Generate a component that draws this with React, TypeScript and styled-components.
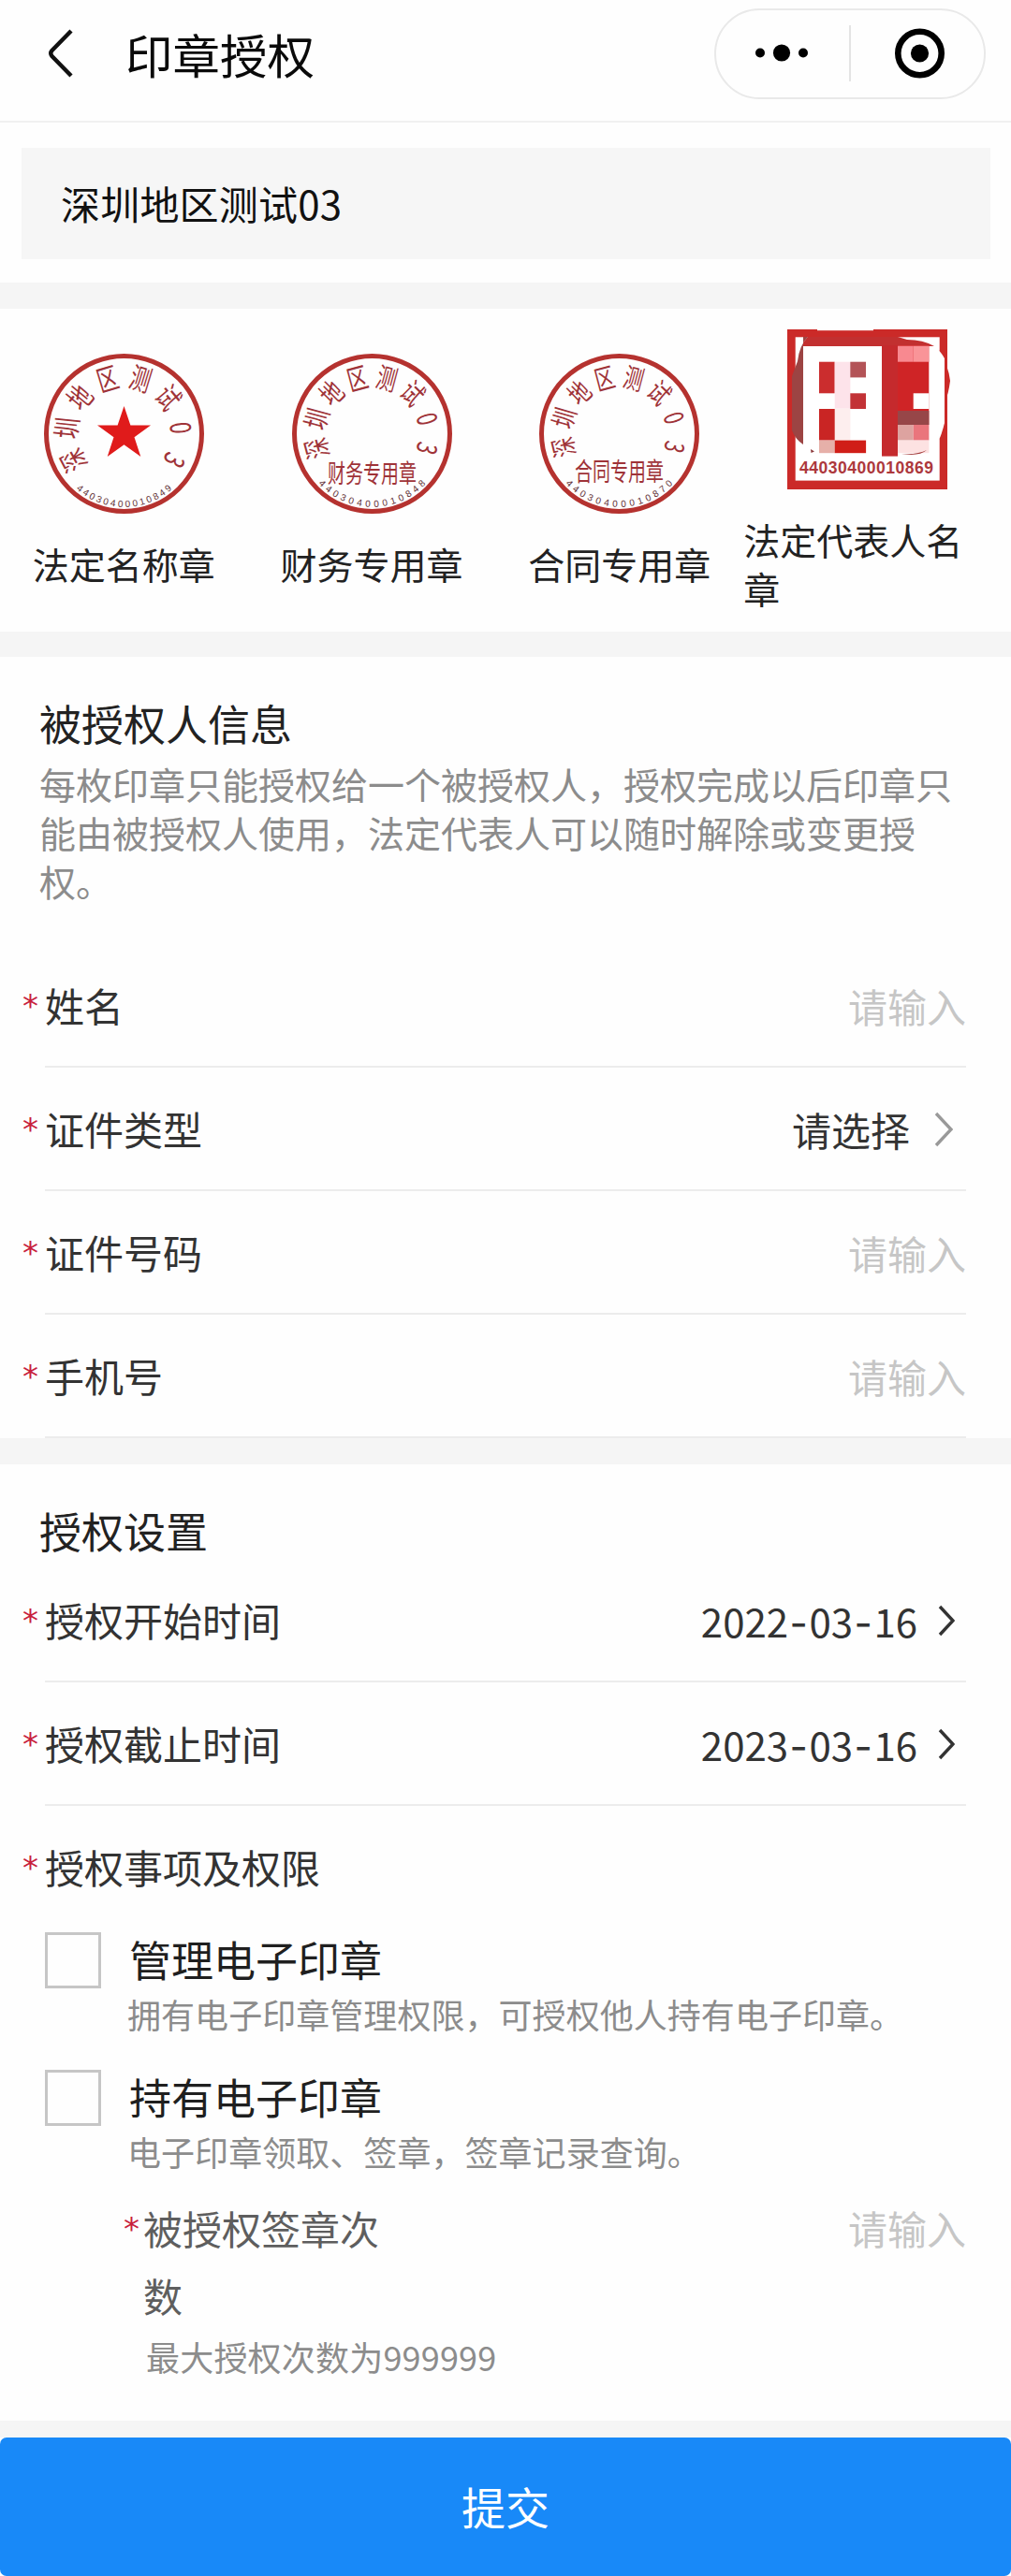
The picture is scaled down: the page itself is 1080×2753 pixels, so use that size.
import styled, { createGlobalStyle } from "styled-components"

type RingSealType = {
  name: string
  code: string
  step: number
  codeStep: number
  size: number
  caption?: string
  captionY?: number
}

type FieldType = {
  label: string
  value: string
  kind: "input" | "select" | "date"
}

const company = "深圳地区测试03"

const personFields: FieldType[] = [
  { label: "姓名", value: "请输入", kind: "input" },
  { label: "证件类型", value: "请选择", kind: "select" },
  { label: "证件号码", value: "请输入", kind: "input" },
  { label: "手机号", value: "请输入", kind: "input" },
]

const dateFields: FieldType[] = [
  { label: "授权开始时间", value: "2022-03-16", kind: "date" },
  { label: "授权截止时间", value: "2023-03-16", kind: "date" },
]

// Round company seal, 0,0 is the center of the ring
const RingSeal = (props: RingSealType) => {
  const chars = props.name.split("")
  const digits = props.code.split("")

  return (
    <SealSvg viewBox="-85.5 -85.5 171 171">
      <circle r="83" fill="none" stroke="#b5322f" strokeWidth="5" />
      {chars.map((char, i) => (
        <SealChar
          key={i}
          fontSize={props.size}
          transform={`rotate(${(i - (chars.length - 1) / 2) * props.step}) translate(0 -61) scale(0.72 1)`}
          y={props.size * 0.37}
        >
          {char}
        </SealChar>
      ))}
      {digits.map((digit, i) => (
        <SealDigit
          key={i}
          transform={`rotate(${((digits.length - 1) / 2 - i) * props.codeStep}) translate(0 75)`}
          y="3.4"
        >
          {digit}
        </SealDigit>
      ))}
      {props.caption
        ? <SealChar fontSize="27.5" transform={`translate(0 ${props.captionY}) scale(0.69 1)`} y="10.2">{props.caption}</SealChar>
        : <path d="M0 -29.6 L6.9 -9 H28.5 L11 3.8 L17.8 24.6 L0 11.8 L-17.8 24.6 L-11 3.8 L-28.5 -9 H-6.9 Z" fill="#e01b1b" />}
    </SealSvg>
  )
}

// Square name seal, the name itself is covered with mosaic
const NameSeal = () => (
  <SealSvg viewBox="0 0 171 171">
    <rect width="171" height="171" fill="#cb2a28" />
    <rect x="32" width="60" height="1.2" fill="#fff" />
    <rect x="8.7" y="8.3" width="154" height="153.3" fill="#fff" />
    <path d="M22 8 Q13 17 11 34 L5 50 V108 Q9 118 17 123 V8 Z" fill="#9c4443" />
    <path d="M22 8 H118 L128 11 Q145 11 157 18 H17 V14 Z" fill="#c23030" />
    <path d="M162 22 Q172 38 174 55 Q172 70 169 75 Q170 100 162 118 Z" fill="#cb2a28" />
    <path d="M151 18 H157 Q163 22 168 31 V100 Q165 112 162 118 L151 136 Z" fill="#fff" />
    <rect x="17" y="18" width="84" height="118" fill="#fff" />
    <rect x="34" y="34.7" width="16.7" height="33.6" fill="#cb2d2e" />
    <rect x="50.7" y="34.7" width="16.7" height="50" fill="#fde3ea" />
    <rect x="50.7" y="84.7" width="16.7" height="34" fill="#fdeeee" />
    <rect x="67.3" y="34.7" width="16.7" height="16.7" fill="#b35357" />
    <rect x="67.3" y="68.3" width="16.7" height="16.7" fill="#c23236" />
    <rect x="34" y="85" width="16.7" height="33.6" fill="#c92524" />
    <rect x="34" y="118.6" width="16.7" height="13.6" fill="#e6b0a9" />
    <rect x="50.7" y="118.6" width="33.4" height="13.6" fill="#d01e18" />
    <rect x="101" y="17" width="50.3" height="85" fill="#cf2426" />
    <rect x="101" y="17" width="17" height="118.6" fill="#c52a2d" />
    <rect x="118" y="17.7" width="16.7" height="17" fill="#f88990" />
    <rect x="134.7" y="17.7" width="16.7" height="17" fill="#f99498" />
    <rect x="134.7" y="68.3" width="16.7" height="16.7" fill="#fff" />
    <rect x="118" y="87" width="33.4" height="15" fill="#974648" />
    <rect x="118" y="102" width="16.7" height="16.6" fill="#dda3a0" />
    <rect x="134.7" y="102" width="16.7" height="16.6" fill="#ea757c" />
    <rect x="118" y="118.6" width="33.4" height="13.6" fill="#fde2e2" />
    <path d="M122 133 Q140 134 149 129 Q141 136 122 133 Z" fill="#a33b3b" />
    <path d="M25 128 L29 130.5 L25.5 132 Z" fill="#8c3a3c" />
    <SquareCode x="13" y="153.6" textLength="143">44030400010869</SquareCode>
  </SealSvg>
)

const Field = (props: FieldType) => (
  <FieldRow>
    <Star>*</Star>
    <FieldBody>
      <FieldLabel>{props.label}</FieldLabel>
      {props.kind === "input" && <Placeholder>{props.value}</Placeholder>}
      {props.kind === "select" && (
        <Value>
          {props.value}
          <Chevron viewBox="0 0 20 38" $width={20} $height={38} $gap={26} $right={14} stroke="#999">
            <path d="M2 2 L18 19 L2 36" />
          </Chevron>
        </Value>
      )}
      {props.kind === "date" && (
        <Value>
          <span>
            {props.value.split("-").map((part, i) => (
              <span key={i}>{i > 0 && <DateDash>-</DateDash>}{part}</span>
            ))}
          </span>
          <Chevron viewBox="0 0 18 34" $width={18} $height={34} $gap={22} $right={12} stroke="#333">
            <path d="M2 2 L16 17 L2 32" />
          </Chevron>
        </Value>
      )}
    </FieldBody>
  </FieldRow>
)

const App = () => {
  return (
    <Page>
      <GlobalStyle />
      <Header>
        <BackIcon viewBox="0 0 28 52">
          <path d="M25 2 L4.5 23 Q2 26 4.5 29 L25 50" />
        </BackIcon>
        <Title>印章授权</Title>
        <Capsule>
          <CapsuleIcon viewBox="0 0 142 60">
            <circle cx="47" cy="29.5" r="5" />
            <circle cx="70" cy="29.5" r="9.1" />
            <circle cx="93" cy="29.5" r="5" />
          </CapsuleIcon>
          <CapsuleLine />
          <CapsuleIcon viewBox="0 0 142 60">
            <circle cx="73.5" cy="30" r="23.2" fill="none" stroke="#000" strokeWidth="6.6" />
            <circle cx="73.5" cy="30" r="9.6" />
          </CapsuleIcon>
        </Capsule>
      </Header>

      <Company>{company}</Company>
      <Divider $height={28} />

      <Seals>
        <SealItem>
          <RingSeal name={company} code="44030400010849" step={33.7} codeStep={5.97} size={31} />
          <SealLabel>法定名称章</SealLabel>
        </SealItem>
        <SealItem>
          <RingSeal name={company} code="44030400010848" step={30} codeStep={6.92} size={30} caption="财务专用章" captionY={42} />
          <SealLabel>财务专用章</SealLabel>
        </SealItem>
        <SealItem>
          <RingSeal name={company} code="44030400010870" step={29.6} codeStep={6.92} size={29} caption="合同专用章" captionY={40} />
          <SealLabel>合同专用章</SealLabel>
        </SealItem>
        <SealItem>
          <NameSeal />
          <SealLabel>法定代表人名章</SealLabel>
        </SealItem>
      </Seals>
      <Divider $height={27} />

      <Section>
        <SectionTitle>被授权人信息</SectionTitle>
        <SectionText>
          每枚印章只能授权给一个被授权人，授权完成以后印章只能由被授权人使用，法定代表人可以随时解除或变更授权。
        </SectionText>
        {personFields.map((field) => <Field key={field.label} {...field} />)}
      </Section>
      <Divider $height={28} />

      <Section>
        <SectionTitle>授权设置</SectionTitle>
        {dateFields.map((field) => <Field key={field.label} {...field} />)}
        <RightsRow>
          <Star>*</Star>
          <FieldLabel>授权事项及权限</FieldLabel>
        </RightsRow>
        <Option>
          <Checkbox />
          <OptionTitle>管理电子印章</OptionTitle>
          <OptionText>拥有电子印章管理权限，可授权他人持有电子印章。</OptionText>
        </Option>
        <Option>
          <Checkbox />
          <OptionTitle>持有电子印章</OptionTitle>
          <OptionText>电子印章领取、签章，签章记录查询。</OptionText>
        </Option>
        <CountRow>
          <Star>*</Star>
          <CountLabel>被授权签章次数</CountLabel>
          <Placeholder>请输入</Placeholder>
        </CountRow>
        <Hint>最大授权次数为999999</Hint>
      </Section>
      <Divider $height={18} />
      <Submit>提交</Submit>
    </Page>
  )
}

export default App

const GlobalStyle = createGlobalStyle`
  * {
    box-sizing: border-box;
  }
  body {
    margin: 0;
    background-color: #f5f5f5;
    font-family: "Noto Sans CJK SC", "Noto Sans", sans-serif;
  }
`

const Page = styled.div`
  width: 1080px;
  background-color: #fefefe;
  color: #333;
  font-size: 42px;
`

const Header = styled.header`
  height: 131px;
  padding: 0 27px 15px 51px;
  border-bottom: 2px solid #f1f1f1;
  display: flex;
  align-items: center;
`

const BackIcon = styled.svg`
  width: 28px;
  height: 52px;
  fill: none;
  stroke: #111;
  stroke-width: 4.4;
`

const Title = styled.h1`
  margin: 0 auto 0 55px;
  color: #0a0a0a;
  font-size: 50.5px;
  font-weight: 400;
  line-height: 72px;
`

const Capsule = styled.div`
  width: 290px;
  height: 97px;
  border: 2px solid #e9e9e9;
  border-radius: 49px;
  display: flex;
  align-items: center;
`

const CapsuleIcon = styled.svg`
  width: 142px;
  height: 60px;
`

const CapsuleLine = styled.div`
  width: 2px;
  height: 60px;
  background-color: #e4e4e4;
`

const Company = styled.div`
  height: 119px;
  margin: 27px 22px 25px 23px;
  padding-left: 42px;
  background-color: #f6f6f6;
  color: #111;
  letter-spacing: 0.2px;
  line-height: 117px;
`

const Divider = styled.div<{ $height: number }>`
  height: ${props => props.$height}px;
  background-color: #f5f5f5;
`

const Seals = styled.div`
  height: 345px;
  padding: 0 21px 0 0;
  display: grid;
  grid-template-columns: repeat(4, 1fr);
  align-items: center;
`

const SealItem = styled.div`
  display: flex;
  flex-direction: column;
  align-items: center;
`

const SealSvg = styled.svg`
  width: 171px;
  height: 171px;
  overflow: visible;
`

const SealChar = styled.text`
  fill: #9f3338;
  text-anchor: middle;
  font-weight: 400;
`

const SealDigit = styled.text`
  fill: #5f2f34;
  text-anchor: middle;
  font-family: "Liberation Sans", sans-serif;
  font-size: 10px;
`

const SquareCode = styled.text`
  fill: #ad383c;
  font-family: "Liberation Sans", sans-serif;
  font-size: 17.5px;
  font-weight: 700;
`

const SealLabel = styled.div`
  margin-top: 27px;
  color: #222;
  font-size: 39px;
  line-height: 52px;
`

const Section = styled.section`
  padding-top: 40px;
`

const SectionTitle = styled.h2`
  margin: 0 0 0 42px;
  color: #222;
  font-size: 45px;
  font-weight: 400;
  line-height: 61px;
`

const SectionText = styled.p`
  margin: 8px 42px 42px;
  color: #8c8c8c;
  font-size: 39px;
  line-height: 52px;
`

const FieldRow = styled.div`
  height: 132px;
  padding: 0 48px 0 24px;
  display: flex;
`

const Star = styled.span`
  width: 24px;
  color: #c8203c;
  font-family: "DejaVu Sans", sans-serif;
  font-size: 34px;
  line-height: 132px;
`

const FieldBody = styled.div`
  flex: 1;
  border-bottom: 2px solid #ececec;
  display: flex;
  justify-content: space-between;
  align-items: center;
`

const FieldLabel = styled.span`
  color: #333;
  line-height: 130px;
`

const Placeholder = styled.span`
  color: #c6c6c6;
`

const Value = styled.span`
  display: flex;
  align-items: center;
`

const DateDash = styled.span`
  margin: 0 1.5px;
  font-family: Inter, sans-serif;
`

const Chevron = styled.svg<{ $width: number; $height: number; $gap: number; $right: number }>`
  width: ${props => props.$width}px;
  height: ${props => props.$height}px;
  margin: 2px ${props => props.$right}px 0 ${props => props.$gap}px;
  fill: none;
  stroke-width: 3.4;
`

const RightsRow = styled.div`
  height: 135px;
  padding-left: 24px;
  display: flex;
`

const Option = styled.div`
  margin: 0 48px 38px;
  display: grid;
  grid-template-columns: 60px 1fr;
  column-gap: 30px;
`

const Checkbox = styled.div`
  width: 60px;
  height: 60px;
  border: 3px solid #c6c6c6;
`

const OptionTitle = styled.div`
  color: #1f1f1f;
  font-size: 45px;
  line-height: 57px;
`

const OptionText = styled.div`
  grid-column: 2;
  margin: 5px 0 0 -2px;
  color: #8c8c8c;
  font-size: 36px;
  letter-spacing: 0.05px;
  line-height: 44px;
`

const CountRow = styled.div`
  margin-top: -14px;
  padding: 0 48px 0 132px;
  line-height: 72px;
  display: flex;
  justify-content: space-between;

  ${Star} {
    width: 21px;
    height: 72px;
    line-height: 75px;
  }
`

const CountLabel = styled.div`
  width: 270px;
  margin-right: auto;
  color: #5e5e5e;
`

const Hint = styled.div`
  margin: 7px 0 0 156px;
  padding-bottom: 47px;
  color: #8c8c8c;
  font-size: 36px;
  letter-spacing: 0.2px;
  line-height: 44px;
`

const Submit = styled.button`
  width: 100%;
  height: 148px;
  padding: 0 0 4px;
  border: none;
  border-radius: 7px;
  background-color: #1889f8;
  color: #fff;
  font-family: inherit;
  font-size: 47px;
  display: block;
`
